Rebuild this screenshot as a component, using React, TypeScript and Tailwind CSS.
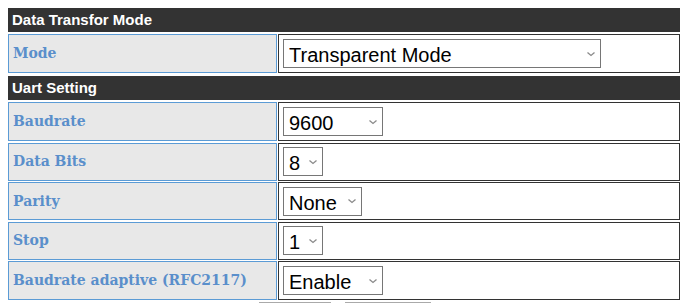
import React from "react";

const labelCls =
  "flex items-center w-[269px] shrink-0 h-full bg-[#e8e8e8] border border-[#5b9bd5] pl-1 text-[#5a8fcb] font-bold text-[14px] [font-family:'DejaVu_Serif',serif]";
const valueCls =
  "flex items-center flex-1 h-full bg-white border border-[#333] pl-1";
const selCls =
  "appearance-none h-[29px] bg-white border border-[#767676] text-[20px] text-black pl-[5px] [font-family:'Liberation_Sans',Arial,sans-serif]";

function Header({ title }: { title: string }) {
  return (
    <div className="h-[24px] bg-[#333333] text-white font-bold text-[15px] flex items-center pl-1 [font-family:'Liberation_Sans',Arial,sans-serif]">
      {title}
    </div>
  );
}

function Chevron() {
  return (
    <svg
      className="absolute right-[5px] top-1/2 -translate-y-1/2 pointer-events-none"
      width="10"
      height="6"
      viewBox="0 0 10 6"
    >
      <path d="M1.5 1.5 L5 4.5 L8.5 1.5" fill="none" stroke="#8a8a8a" strokeWidth="1.3" />
    </svg>
  );
}

function Row({
  label,
  options,
  width,
  h,
}: {
  label: string;
  options: string[];
  width: string;
  h: string;
}) {
  return (
    <div className={`flex gap-[1px] ${h}`}>
      <div className={labelCls}>{label}</div>
      <div className={valueCls}>
        <div className="relative flex">
          <select className={`${selCls} ${width}`} defaultValue={options[0]}>
            {options.map((o) => (
              <option key={o}>{o}</option>
            ))}
          </select>
          <Chevron />
        </div>
      </div>
    </div>
  );
}

export default function App() {
  return (
    <div className="w-[690px] h-[303px] overflow-hidden bg-white">
      <div className="pt-2 pl-2 w-[680px] flex flex-col">
        <Header title="Data Transfor Mode" />
        <div className="h-[2px]" />
        <Row
          label="Mode"
          options={["Transparent Mode", "Modbus Mode"]}
          width="w-[318px]"
          h="h-[39px]"
        />
        <div className="h-[3px]" />
        <Header title="Uart Setting" />
        <div className="flex flex-col gap-[1.5px] mt-[2px]">
          <Row label="Baudrate" options={["9600", "115200"]} width="w-[100px]" h="h-[39px]" />
          <Row label="Data Bits" options={["8", "7"]} width="w-[40px]" h="h-[38px]" />
          <Row label="Parity" options={["None", "Odd", "Even"]} width="w-[79px]" h="h-[38px]" />
          <Row label="Stop" options={["1", "2"]} width="w-[40px]" h="h-[38px]" />
          <Row
            label="Baudrate adaptive (RFC2117)"
            options={["Enable", "Disable"]}
            width="w-[100px]"
            h="h-[39px]"
          />
        </div>
        <div className="flex gap-[14px] pl-[251px] mt-[2px]">
          <button className="w-[72px] h-[28px] border border-[#aaa] bg-[#efefef]" aria-label="Save" />
          <button className="w-[86px] h-[28px] border border-[#aaa] bg-[#efefef]" aria-label="Cancel" />
        </div>
      </div>
    </div>
  );
}
